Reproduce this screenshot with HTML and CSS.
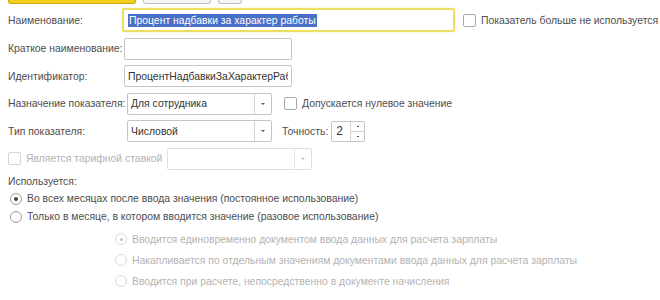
FILE: index.html
```html
<!doctype html>
<html>
<head>
<meta charset='UTF-8'>
<title>Показатель</title>
<link rel="stylesheet" href="styles.css">
</head>
<body>
<div class='toolbar'>
<div class='btn btn-main'></div>
<div class='btn btn-plain'></div>
<div class='btn btn-small'></div>
</div>

<div class='row row-first'>
<label class='label'>Наименование:</label>
<div class='field field-name'><span class='selected'>Процент надбавки за характер работы</span></div>
<span class='check'></span><span class='check-text'>Показатель больше не используется</span>
</div>

<div class='row'>
<label class='label'>Краткое наименование:</label>
<div class='field field-short'></div>
</div>

<div class='row'>
<label class='label'>Идентификатор:</label>
<div class='field field-short'><span class='clip'>ПроцентНадбавкиЗаХарактерРаботы</span></div>
</div>

<div class='row'>
<label class='label'>Назначение показателя:</label>
<div class='field select'><span class='select-value'>Для сотрудника</span><span class='drop'><i></i></span></div>
<span class='check check-mid'></span><span class='check-text'>Допускается нулевое значение</span>
</div>

<div class='row'>
<label class='label'>Тип показателя:</label>
<div class='field select'><span class='select-value'>Числовой</span><span class='drop'><i></i></span></div>
<span class='precision'>Точность:</span>
<div class='field spin'><span class='spin-value'>2</span><span class='spin-btns'><i class='up'></i><i class='down'></i></span></div>
</div>

<div class='row'>
<span class='check check-off'></span><span class='check-text text-off'>Является тарифной ставкой</span>
<div class='field select select-off'><span class='select-value'></span><span class='drop'><i></i></span></div>
</div>

<div class='group-title'>Используется:</div>
<div class='radio-row'><span class='radio radio-on'></span>Во всех месяцах после ввода значения (постоянное использование)</div>
<div class='radio-row'><span class='radio'></span>Только в месяце, в котором вводится значение (разовое использование)</div>

<div class='sub-options'>
<div class='radio-row sub text-off'><span class='radio radio-on radio-off'></span>Вводится единовременно документом ввода данных для расчета зарплаты</div>
<div class='radio-row sub text-off'><span class='radio radio-off'></span>Накапливается по отдельным значениям документами ввода данных для расчета зарплаты</div>
<div class='radio-row sub text-off'><span class='radio radio-off'></span>Вводится при расчете, непосредственно в документе начисления</div>
</div>
</body>
</html>
```

FILE: styles.css
```css
body
{
margin: 0;
padding: 0 8px;
font-family: "Liberation Sans", Arial, sans-serif;
font-size: 10.4px;
color: #4d4d4d;
background-color: white;
overflow: hidden;
}

.toolbar
{
display: flex;
gap: 7px;
height: 4px;
}

.btn
{
height: 3px;
border: 1px solid #bdbdbd;
border-top: none;
border-radius: 0 0 3px 3px;
background-color: #f6f6f6;
}
.btn-main
{
width: 126px;
background-color: #f2cf1b;
border-color: #c9a90c;
}
.btn-plain
{
width: 66px;
}
.btn-small
{
width: 22px;
}

.row
{
display: flex;
align-items: center;
height: 22px;
margin-top: 5.5px;
}
.row-first
{
height: 24px;
margin-top: 4px;
}

.label
{
width: 114px;
flex-shrink: 0;
white-space: nowrap;
}

.field
{
box-sizing: border-box;
flex-shrink: 0;
height: 22px;
border: 1px solid #c4c4c4;
border-radius: 2px;
background-color: white;
color: #333;
display: flex;
align-items: center;
padding: 0 3px;
overflow: hidden;
white-space: nowrap;
}

.field-name
{
width: 333px;
height: 24px;
border: 2px solid #eedd63;
box-shadow: 0 0 2px #f6ec9c;
padding: 0 4px;
}
.selected
{
background-color: #4a6fc6;
color: white;
padding: 1px 1px;
}

.field-short
{
width: 168px;
margin-left: 2px;
}
.clip
{
display: block;
overflow: hidden;
width: 162px;
}

.check
{
box-sizing: border-box;
width: 13px;
height: 13px;
border: 1px solid #a8a8a8;
border-radius: 2px;
margin-left: 8px;
margin-right: 5px;
flex-shrink: 0;
}
.check-mid
{
margin-left: 12px;
}
.check-off
{
margin-left: 0;
border-color: #d6d6d6;
}
.check-text
{
white-space: nowrap;
}
.text-off
{
color: #b3b3b3;
}

.select
{
width: 145px;
margin-left: 5px;
padding: 0 0 0 3px;
}
.select-value
{
flex: 1;
}
.drop
{
width: 16px;
height: 100%;
border-left: 1px solid #d2d2d2;
display: flex;
align-items: center;
justify-content: center;
}
.drop i
{
width: 0;
height: 0;
border-left: 2px solid transparent;
border-right: 2px solid transparent;
border-top: 2px solid #555;
}
.select-off
{
margin-left: 5px;
border-color: #dedede;
}
.select-off .drop
{
border-color: #e6e6e6;
}
.select-off .drop i
{
border-top-color: #bbb;
}

.precision
{
margin-left: 10px;
margin-right: 3px;
}
.spin
{
width: 34px;
height: 21px;
padding: 0 0 0 4px;
}
.spin-value
{
flex: 1;
font-size: 12px;
}
.spin-btns
{
width: 13px;
height: 100%;
border-left: 1px solid #d2d2d2;
display: flex;
flex-direction: column;
}
.spin-btns i
{
flex: 1;
display: flex;
align-items: center;
justify-content: center;
}
.spin-btns .up
{
border-bottom: 1px solid #d2d2d2;
}
.spin-btns i::after
{
content: '';
width: 2px;
height: 1px;
background-color: #555;
}

.group-title
{
margin-top: 6px;
height: 14px;
}

.radio-row
{
display: flex;
align-items: center;
height: 18px;
white-space: nowrap;
}

.radio
{
box-sizing: border-box;
width: 12px;
height: 12px;
border: 1px solid #9c9c9c;
border-radius: 50%;
margin-left: 2px;
margin-right: 5px;
display: flex;
align-items: center;
justify-content: center;
flex-shrink: 0;
}
.radio-on::after
{
content: '';
width: 4px;
height: 4px;
border-radius: 50%;
background-color: #3f4a44;
}
.radio-off
{
border-color: #d8d8d8;
}
.radio-off::after
{
background-color: #c4c4c4;
width: 3px;
height: 3px;
}

.sub-options
{
margin-top: 3px;
}
.sub
{
height: 21px;
padding-left: 105px;
}
```
